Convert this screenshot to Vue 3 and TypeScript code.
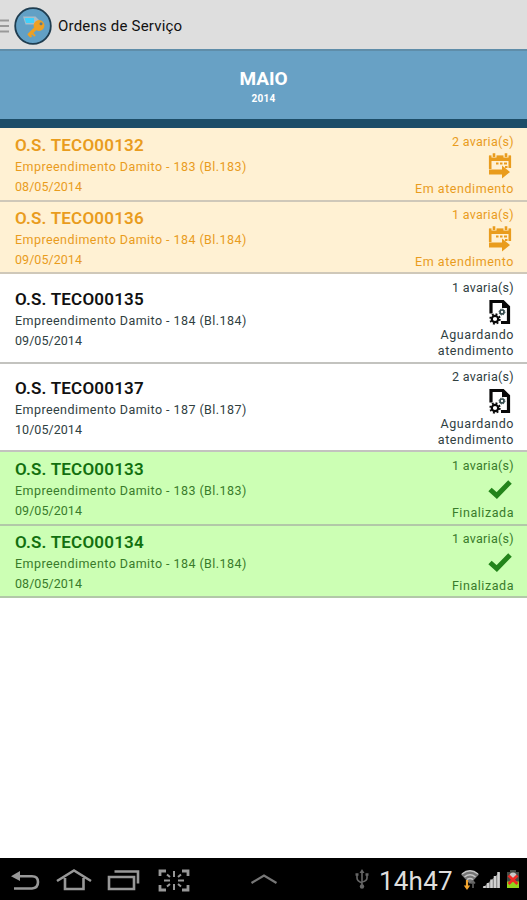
<script setup lang="ts">
type Status = 'progress' | 'waiting' | 'done'

interface Order {
  code: string
  place: string
  date: string
  damages: number
  status: Status
  size: string
}

const labels: Record<Status, string[]> = {
  progress: ['Em atendimento'],
  waiting: ['Aguardando', 'atendimento'],
  done: ['Finalizada'],
}

const orders: Order[] = [
  { code: 'TECO00132', place: 'Empreendimento Damito - 183 (Bl.183)', date: '08/05/2014', damages: 2, status: 'progress', size: 'h74' },
  { code: 'TECO00136', place: 'Empreendimento Damito - 184 (Bl.184)', date: '09/05/2014', damages: 1, status: 'progress', size: 'h72' },
  { code: 'TECO00135', place: 'Empreendimento Damito - 184 (Bl.184)', date: '09/05/2014', damages: 1, status: 'waiting', size: 'h90' },
  { code: 'TECO00137', place: 'Empreendimento Damito - 187 (Bl.187)', date: '10/05/2014', damages: 2, status: 'waiting', size: 'h88' },
  { code: 'TECO00133', place: 'Empreendimento Damito - 183 (Bl.183)', date: '09/05/2014', damages: 1, status: 'done', size: 'h74' },
  { code: 'TECO00134', place: 'Empreendimento Damito - 184 (Bl.184)', date: '08/05/2014', damages: 1, status: 'done', size: 'h72' },
]
</script>

<template>
  <div class="screen">
    <header class="bar">
      <svg class="menu" width="10" height="16" viewBox="0 0 10 16"><path d="M0 2.500H9M0 8H9M0 13.500H9" stroke="#999" stroke-width="2" /></svg>
      <svg class="logo" width="40" height="40" viewBox="0 0 40 40">
        <circle cx="20" cy="20" r="17.800" fill="#62a0c5" stroke="#1f3d50" stroke-width="1.800" />
        <path d="M10 10.500H22.500L26 14V18.500H12.500Z" fill="#a8bcc8" />
        <path d="M11.500 12H21V17H13Z" fill="#3fd0fb" />
        <path d="M24 21L15.500 29.500" stroke="#eea023" stroke-width="3.400" />
        <path d="M18.500 26.500L22 30M15.800 28.500L18.500 31" stroke="#eea023" stroke-width="2" />
        <circle cx="26" cy="19.500" r="5.400" fill="#eea023" />
        <circle cx="28" cy="17.800" r="1.500" fill="#5c7c88" />
      </svg>
      <h1>Ordens de Serviço</h1>
    </header>
    <section class="month">
      <strong>MAIO</strong>
      <span>2014</span>
    </section>

    <main>
      <article v-for="o in orders" :key="o.code" class="order" :class="[o.status, o.size]">
        <div class="info">
          <h2>O.S. {{ o.code }}</h2>
          <p class="place">{{ o.place }}</p>
          <p class="date">{{ o.date }}</p>
        </div>
        <div class="state">
          <p class="count">{{ o.damages }} avaria(s)</p>
          <div class="glyph">
            <svg v-if="o.status === 'progress'" width="24" height="26" viewBox="0 0 24 26">
              <path d="M2.200 16V4H21.800V15" fill="none" stroke="currentColor" stroke-width="2.600" />
              <path d="M1 2.500H23V8H1Z" fill="currentColor" />
              <path d="M6 1V4.500M18 1V4.500" stroke="#fff1d3" stroke-width="5" />
              <path d="M6 .2V4M18 .2V4" stroke="currentColor" stroke-width="2.600" />
              <path d="M8 10.500H10.500M12 10.500H14.500M16 10.500H19M17 14H19.500" stroke="currentColor" stroke-width="2.200" />
              <path d="M1 16.500H14V12.500L22 19L14 25.500V21.500H1Z" fill="currentColor" />
            </svg>
            <svg v-else-if="o.status === 'waiting'" width="24" height="26" viewBox="0 0 24 26">
              <path d="M3 14.500V2.500H15L20.500 8V23.500H13" fill="none" stroke="#080808" stroke-width="3.200" />
              <path d="M14 2V9H21Z" fill="#080808" />
              <circle cx="7" cy="20" r="3.200" fill="none" stroke="#080808" stroke-width="2.200" />
              <circle cx="7" cy="20" r="4.800" fill="none" stroke="#080808" stroke-width="1.800" stroke-dasharray="1.900 1.870" />
              <circle cx="14" cy="13" r="2" fill="none" stroke="#33494b" stroke-width="1.700" />
              <circle cx="14" cy="13" r="3" fill="none" stroke="#33494b" stroke-width="1" stroke-dasharray="1.200 1.156" />
            </svg>
            <svg v-else width="24" height="26" viewBox="0 0 24 26">
              <path d="M2 12.500L8.800 18.500L22 5" fill="none" stroke="#23841b" stroke-width="5" />
            </svg>
          </div>
          <p v-for="line in labels[o.status]" :key="line" class="label">{{ line }}</p>
        </div>
      </article>
    </main>

    <footer class="system">
      <svg class="keys" width="290" height="41" viewBox="0 0 290 41" fill="none" stroke="#989898" stroke-width="2.600">
        <path d="M14 31.500H32Q38 31 38 25Q38 19.300 32 19.300H18" />
        <path d="M11 19.300L20 14V24Z" fill="#989898" stroke="none" />
        <path d="M57 24L74 13.500L91 24M65 21V32H83.500V21" />
        <path d="M109 20H134V32H109ZM114.500 14.500H138V26.500" />
        <path d="M160 19V14H166M182 14H188V19M188 28V33H182M166 33H160V28" stroke-width="2.800" />
        <path d="M174 14V20M174 27V33M164 23.500H170M178 23.500H184M167 17.500L170 20M181 17.500L178 20M167 29.500L170 27M181 29.500L178 27" stroke-width="2" />
        <path d="M251.500 26L264 18.500L276.500 26" stroke="#777" stroke-width="2.200" />
      </svg>
      <svg class="usb" width="16" height="22" viewBox="0 0 16 22" fill="none" stroke="#666" stroke-width="1.600">
        <path d="M8 3V18M3 7V10Q3 13 8 15M13 6V10Q13 13 8 14" />
        <path d="M5.500 5L8 1L10.500 5Z" fill="#666" stroke="none" />
        <path d="M1.500 6.500H4.500M11.500 6.500H14.500" stroke-width="2.400" />
        <circle cx="8" cy="18.500" r="2.200" fill="#666" stroke="none" />
      </svg>
      <time>14h47</time>
      <svg class="signals" width="66" height="26" viewBox="0 0 66 26">
        <path d="M2 7.500Q11 -.5 20 7.500L11 17Z" fill="#747474" />
        <path d="M3 7Q11 .5 19 7M5.500 10Q11 5.500 16.500 10M8 12.700Q11 10.500 14 12.700" fill="none" stroke="#c4c4c4" stroke-width="1.500" />
        <path d="M8 13V21" stroke="#f5a62f" stroke-width="2.200" />
        <path d="M4.800 18.500H11.200L8 23Z" fill="#f5a62f" />
        <path d="M14 15V21M12 16.500L14 14L16 16.500" fill="none" stroke="#666" stroke-width="1.500" />
        <path d="M23.500 21L41 5V21Z" fill="#777" />
        <path d="M25.500 21V19M29 21V16M32.500 21V12.500M36 21V9M39.500 21V5" stroke="#d0d0d0" stroke-width="2.500" />
        <path d="M48 5H51V3H57V5H60V21H48Z" fill="#454b45" />
        <path d="M48 14.500H60V21H48Z" fill="#91d51c" />
        <circle cx="54" cy="9" r="3.500" fill="#c9c9c9" />
        <path d="M49.500 8.500L58.500 17M58.500 8.500L49.500 17" stroke="#ed2924" stroke-width="2.700" />
      </svg>
    </footer>
  </div>
</template>

<style>
body {
  margin: 0;
}
</style>

<style scoped>
.screen {
  width: 527px;
  height: 900px;
  display: flex;
  flex-direction: column;
  overflow: hidden;
  background: #fff;
  font-family: Roboto, "Liberation Sans", sans-serif;
}

h1,
h2,
p {
  margin: 0;
  white-space: nowrap;
}

.bar {
  box-sizing: border-box;
  height: 51px;
  flex: none;
  display: flex;
  align-items: center;
  background: #dedede;
  border-bottom: 2px solid #5f8da9;
}

.logo {
  margin: 2px 0 0 3px;
}

.menu {
  margin-top: 2px;
}

h1 {
  margin: 3px 0 0 5px;
  font-size: 15px;
  font-weight: 400;
  letter-spacing: 0.2px;
  color: #111;
}

.month {
  box-sizing: border-box;
  height: 77px;
  flex: none;
  display: flex;
  flex-direction: column;
  align-items: center;
  padding-top: 15px;
  background: #68a1c5;
  border-bottom: 9px solid #1d4d68;
  color: #fff;
}

.month strong {
  font-size: 19px;
  line-height: 25px;
}

.month span {
  font-size: 10px;
  font-weight: 700;
  line-height: 16px;
  letter-spacing: 0.3px;
}

main {
  flex: 1;
}

.order {
  box-sizing: border-box;
  display: flex;
  justify-content: space-between;
  padding: 0 13px 0 15px;
  border-bottom: 2px solid #c3c3bf;
}

.h72 { height: 72px; }
.h74 { height: 74px; }
.h88 { height: 88px; }
.h90 { height: 90px; }

.order.progress {
  background: #fff1d3;
  border-color: #cfc8b9;
  color: #e99c1d;
}

.order.waiting {
  color: #30403f;
}

.order.done {
  background: #ccffb4;
  border-color: #b2c8a8;
  color: #397b2b;
}

.info {
  display: flex;
  flex-direction: column;
  justify-content: center;
  padding-top: 4px;
}

h2 {
  margin-bottom: 1px;
  font-size: 17px;
  line-height: 21px;
  font-weight: 600;
  letter-spacing: 0.2px;
}

.waiting h2 { color: #111; }
.done h2 { color: #12700f; }

.place,
.date,
.count,
.label {
  font-size: 12.500px;
  line-height: 20px;
  letter-spacing: 0.44px;
}

.date {
  letter-spacing: 0.05px;
}

.state {
  display: flex;
  flex-direction: column;
  align-items: flex-end;
  padding-top: 6px;
}

.count,
.label {
  line-height: 16px;
}

.count {
  letter-spacing: 0.3px;
}

.label {
  letter-spacing: 0.55px;
}

.glyph {
  height: 31px;
  display: flex;
  align-items: center;
  margin-right: 2px;
}

.h72 .state,
.h88 .state {
  padding-top: 5px;
}

.system {
  height: 42px;
  flex: none;
  display: flex;
  align-items: center;
  background: #000;
}

.keys {
  margin-bottom: 4px;
}

.usb {
  margin-left: 64px;
}

time {
  margin: 3px 0 0 9px;
  width: 76px;
  font-size: 26px;
  line-height: 40px;
  letter-spacing: 0.2px;
  color: #dedede;
  white-space: nowrap;
}

.signals {
  margin: 1px 0 0 4px;
}
</style>
